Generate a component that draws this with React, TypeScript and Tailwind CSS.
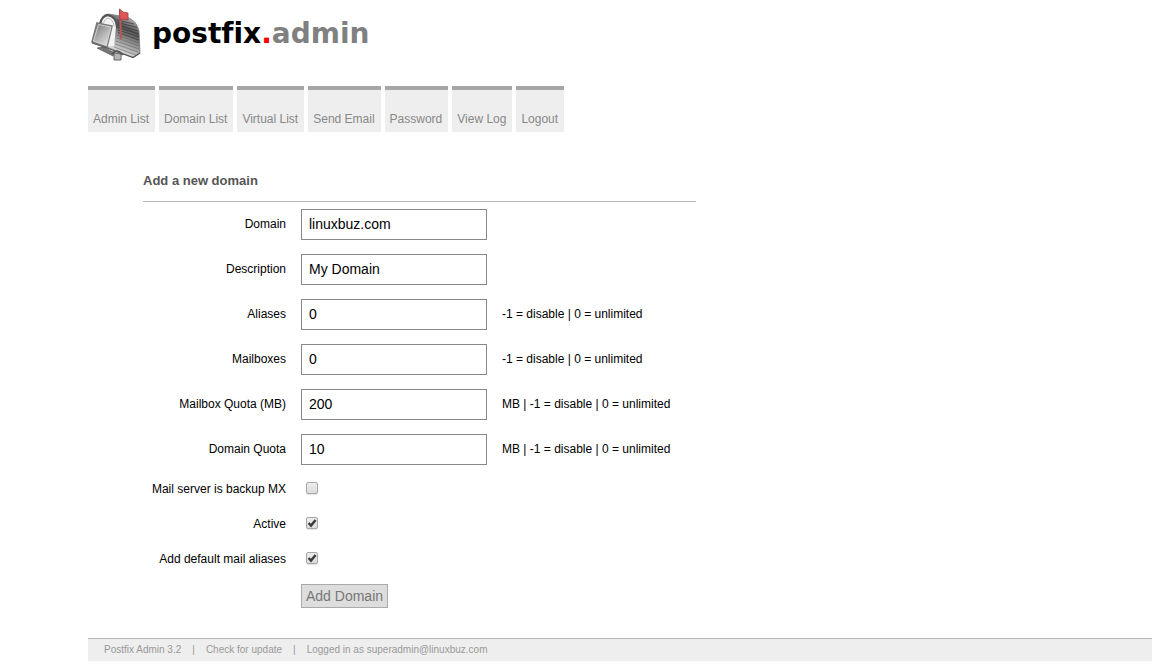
import React from "react";

const tabs = [
  "Admin List",
  "Domain List",
  "Virtual List",
  "Send Email",
  "Password",
  "View Log",
  "Logout",
];

type TextField = { id: string; label: string; value: string; hint?: string };

const textFields: TextField[] = [
  { id: "domain", label: "Domain", value: "linuxbuz.com" },
  { id: "description", label: "Description", value: "My Domain" },
  { id: "aliases", label: "Aliases", value: "0", hint: "-1 = disable | 0 = unlimited" },
  { id: "mailboxes", label: "Mailboxes", value: "0", hint: "-1 = disable | 0 = unlimited" },
  { id: "maxquota", label: "Mailbox Quota (MB)", value: "200", hint: "MB | -1 = disable | 0 = unlimited" },
  { id: "quota", label: "Domain Quota", value: "10", hint: "MB | -1 = disable | 0 = unlimited" },
];

const checkFields = [
  { id: "backupmx", label: "Mail server is backup MX", checked: false },
  { id: "active", label: "Active", checked: true },
  { id: "default_aliases", label: "Add default mail aliases", checked: true },
];

function MailboxIcon() {
  return (
    <svg className="h-14 w-14 shrink-0" viewBox="88 6 56 56" aria-hidden="true">
      <defs>
        <linearGradient id="shell" gradientUnits="userSpaceOnUse" x1="132" y1="17" x2="112" y2="54">
          <stop offset="0" stopColor="#bdbdbd" />
          <stop offset="0.3" stopColor="#555" />
          <stop offset="0.6" stopColor="#9a9a9a" />
          <stop offset="1" stopColor="#f6f6f6" />
        </linearGradient>
        <linearGradient id="door" x1="0" y1="0" x2="0.9" y2="1">
          <stop offset="0" stopColor="#666" />
          <stop offset="0.45" stopColor="#a8a8a8" />
          <stop offset="1" stopColor="#ececec" />
        </linearGradient>
      </defs>
      <path d="M97 48 L103 47 L115 53 L113 56 Z" fill="#777" stroke="#444" strokeWidth="0.6" />
      <path d="M114 53 L114 60 L121 60 L121 54 Z" fill="#b5b5b5" stroke="#666" strokeWidth="1" />
      <path
        d="M100 24 Q102 15 108 14 L127 17 Q137 21 139 31 L140 53 L133 57.5 L107 47 Z"
        fill="url(#shell)"
        stroke="#777"
        strokeWidth="0.8"
      />
      <g stroke="#333" strokeWidth="0.7" fill="none">
        <path d="M117 20 L134 24 M118 22.5 L137 27.5 M118 25 L138 31 M118 27.5 L139 34 M118 30 L139 37 M118 32.5 L139 40" />
      </g>
      <g stroke="#666" strokeWidth="0.6" fill="none">
        <path d="M117 35 L139 43 M117 38 L139 46 M116 41 L139 49 M115 44 L138 52 M114 47 L136 55" />
      </g>
      <path d="M101 25 Q102 17 108 16 Q116 17 116 27 L114 46 L108 46 Z" fill="#f3f3f3" />
      <path d="M100 24 Q102 15 108 15 Q117 17 117 28" fill="none" stroke="#555" strokeWidth="2" />
      <path d="M103 24 Q105 18 108 18 Q113 19 114 26" fill="none" stroke="#bbb" strokeWidth="1" />
      <path d="M97 23 L112 26 L107 47 L92 42 Z" fill="url(#door)" stroke="#777" strokeWidth="1.6" />
      <path d="M98.5 24.5 L111 27 L106.5 45.5 L93.5 41 Z" fill="none" stroke="#dadada" strokeWidth="0.8" />
      <path d="M92 43 L107 48 L133 57.5 L140 53" fill="none" stroke="#555" strokeWidth="1.3" />
      <path d="M112 54 Q117 48 123 55" fill="none" stroke="#555" strokeWidth="1.8" />
      <path d="M119 10 L121 10 L122 39 L120 39 Z" fill="#b9585a" />
      <path d="M119.5 9 L123 12 L128 13 L128 20 L123 19 L120 20 Z" fill="#df5559" stroke="#9d3b3e" strokeWidth="0.8" />
    </svg>
  );
}

function CheckBox({ id, checked }: { id: string; checked: boolean }) {
  return (
    <span className="mx-[5px] mb-0.5 grid h-3 w-3">
      <input
        id={id}
        type="checkbox"
        defaultChecked={checked}
        className="peer col-start-1 row-start-1 m-0 h-3 w-3 appearance-none rounded-xs border border-[#a6a6a6] bg-linear-to-b from-[#ededed] to-[#dcdcdc] shadow-[0_1px_1px_rgba(0,0,0,0.12)]"
      />
      <svg
        className="pointer-events-none invisible col-start-1 row-start-1 h-3 w-3 peer-checked:visible"
        viewBox="0 0 12 12"
        aria-hidden="true"
      >
        <path d="M2.6 6 L5 8.6 L9.6 3" fill="none" stroke="#3b3b3b" strokeWidth="2.4" />
      </svg>
    </span>
  );
}

export default function App() {
  return (
    <div className="bg-white pl-[88px] font-['Liberation_Sans',Arial,sans-serif] text-xs text-black">
      <header>
        <a href="#" className="flex h-[86px] items-start gap-2 pt-1.5">
          <MailboxIcon />
          <span className="mt-2.5 font-['DejaVu_Sans',sans-serif] text-[28px] leading-9 font-bold [font-variant-ligatures:none]">
            postfix<span className="text-[#f00]">.</span>
            <span className="text-[#808080]">admin</span>
          </span>
        </a>
        <nav>
          <ul className="flex gap-1">
            {tabs.map((tab) => (
              <li key={tab}>
                <a
                  href="#"
                  className="block border-t-4 border-[#a6a6a6] bg-[#eee] pt-[21px] pr-1.5 pb-[5px] pl-[5px] leading-4 text-[#888]"
                >
                  {tab}
                </a>
              </li>
            ))}
          </ul>
        </nav>
      </header>

      <main className="max-w-[608px] pt-10 pb-[30px] pl-[55px]">
        <form onSubmit={(e) => e.preventDefault()}>
          <h1 className="h-[30px] border-b border-[#b5b5b5] pt-px text-[13px] leading-4 font-bold text-[#555]">
            Add a new domain
          </h1>
          {textFields.map((f) => (
            <div key={f.id} className="grid h-[45px] grid-cols-[143px_186px_1fr] items-center gap-x-[15px]">
              <label htmlFor={f.id} className="pb-0.5 text-right">
                {f.label}
              </label>
              <input
                id={f.id}
                type="text"
                defaultValue={f.value}
                className="h-[31px] w-full border border-[#888] bg-white px-[7px] pb-0.5 text-[14px]"
              />
              {f.hint && <span className="pb-0.5">{f.hint}</span>}
            </div>
          ))}
          {checkFields.map((f) => (
            <div key={f.id} className="grid h-[35px] grid-cols-[143px_1fr] items-center gap-x-[15px] pb-0.5">
              <label htmlFor={f.id} className="text-right">
                {f.label}
              </label>
              <CheckBox id={f.id} checked={f.checked} />
            </div>
          ))}
          <div className="pt-[7px] pl-[158px]">
            <button
              type="submit"
              className="block h-6 border border-[#aaa] bg-[#ddd] px-1 text-[14px] leading-5 text-[#777]"
            >
              Add Domain
            </button>
          </div>
        </form>
      </main>

      <footer className="flex h-[23px] items-center gap-[11px] border-t border-[#b5b5b5] bg-[#eee] px-4 text-[10px] text-[#999]">
        <a href="#">Postfix Admin 3.2</a>
        <span>|</span>
        <a href="#">Check for update</a>
        <span>|</span>
        <span>Logged in as superadmin@linuxbuz.com</span>
      </footer>
    </div>
  );
}
